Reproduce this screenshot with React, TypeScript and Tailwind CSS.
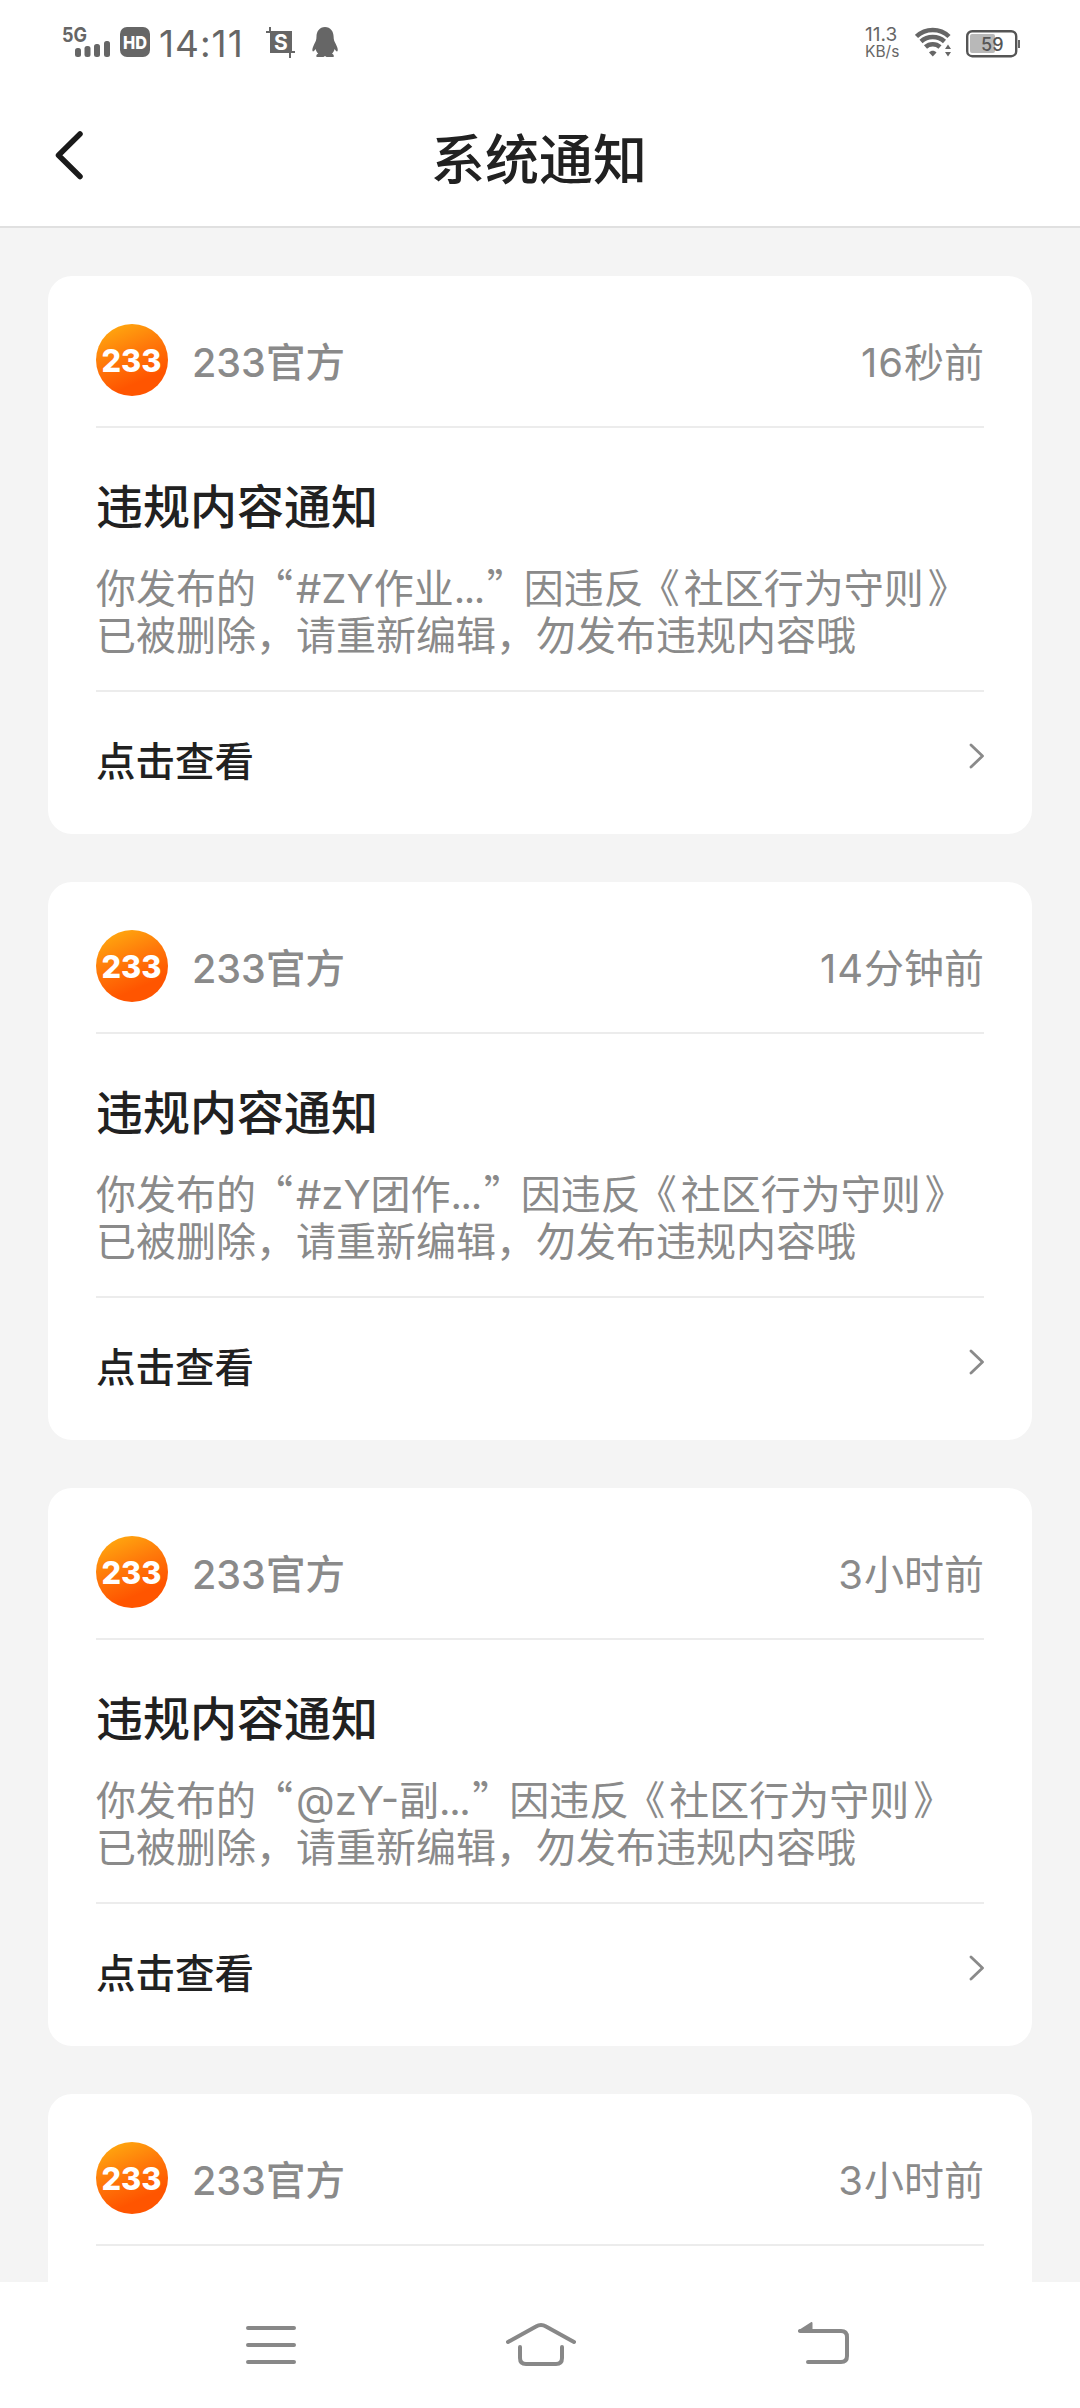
import React from 'react';

type Notice = {
  id: number;
  time: [string, string];
  tag?: string;
  excerpt?: string;
};

const notices: Notice[] = [
  { id: 1, time: ['16', '秒前'], tag: '#ZY', excerpt: '作业' },
  { id: 2, time: ['14', '分钟前'], tag: '#zY', excerpt: '团作' },
  { id: 3, time: ['3', '小时前'], tag: '@zY-', excerpt: '副' },
  { id: 4, time: ['3', '小时前'] },
];

const StatusBar = () => (
  <div className="flex h-[84px] items-start justify-between pt-[27px] pr-[60px] pl-[62px] font-[Inter,sans-serif] text-[#666]">
    <div className="flex">
      <svg className="overflow-visible" width="50" height="31" viewBox="0 0 50 31" fill="currentColor">
        <text x="0" y="15" fontSize="20" fontWeight="700" textLength="25" lengthAdjust="spacingAndGlyphs">
          5G
        </text>
        <rect x="13" y="21" width="6" height="9" rx="2.5" />
        <rect x="22.5" y="19" width="6" height="11" rx="2.5" />
        <rect x="32" y="17" width="6" height="13" rx="2.5" />
        <rect x="42" y="14" width="6" height="16" rx="2.5" />
      </svg>
      <svg className="ml-2" width="30" height="30" viewBox="0 0 30 30">
        <rect width="30" height="30" rx="7" fill="currentColor" />
        <text x="3" y="21.5" fontSize="18" fontWeight="800" fill="#fff" textLength="24" lengthAdjust="spacingAndGlyphs">
          HD
        </text>
      </svg>
      <span className="ml-[9px] w-[88px] text-[37px] leading-[34px] tracking-[1px] whitespace-nowrap">14:11</span>
      <svg className="ml-[18px]" width="31" height="31" viewBox="0 0 31 31">
        <path d="M5 0v5M1 5h5M25 25v6M24 25h6" stroke="currentColor" strokeWidth="2" />
        <rect x="5" y="4" width="22" height="22" fill="currentColor" />
        <text x="16" y="22.5" fontSize="21" fontWeight="700" fill="#fff" textAnchor="middle">
          S
        </text>
      </svg>
      <svg className="ml-[16px]" width="27" height="31" viewBox="0 0 27 31" fill="currentColor">
        <path d="M13 0C7.5 0 4.5 4.5 4.5 9.5C4.5 13 3.6 14.5 2.3 17C.8 20 0 22.5 .5 24C1 25 2.3 24 3.6 22C4.2 24 5 25.5 6.2 26.8C4.5 27.5 4 28.5 4.6 30H11.5L13 29L14.5 30H21.6C22.2 28.5 21.5 27.5 20 26.8C21.2 25.5 22 24 22.6 22C23.8 24 25 25 25.6 24C26.2 22.5 25.3 20 23.8 17C22.5 14.5 21.6 13 21.6 9.5C21.6 4.5 18.5 0 13 0Z" />
      </svg>
    </div>
    <div className="flex">
      <div className="flex w-[50px] flex-col whitespace-nowrap">
        <span className="text-[19px] leading-[15px]">11.3</span>
        <span className="mt-[3px] text-[15.5px] leading-[13px]">KB/s</span>
      </div>
      <svg width="37" height="31" viewBox="0 0 37 31" fill="none" stroke="currentColor">
        <path d="M1.5 9.5C10.5 .8 25 .8 34 9.5" strokeWidth="4.5" />
        <path d="M6 14.5C12.5 8.5 23 8.5 29.5 14.5" strokeWidth="4.5" />
        <path d="M10.5 20C14.5 16.3 21 16.3 25 20" strokeWidth="4.5" />
        <path d="M14 25.5C16 23.3 19.5 23.3 21.5 25.5L17.8 29.5Z" fill="currentColor" stroke="none" />
        <path d="M33 17.5L36 22H30ZM33 29.5L36 25H30Z" fill="currentColor" stroke="none" />
      </svg>
      <svg className="ml-[14px]" width="54" height="31" viewBox="0 0 54 31">
        <rect x="1.2" y="4.2" width="49" height="25" rx="5" fill="none" stroke="#555" strokeWidth="2.4" />
        <rect x="4" y="7" width="25" height="19" rx="2" fill="#b8b8b8" />
        <path d="M53 13v8" stroke="currentColor" strokeWidth="2" />
        <text x="15" y="23.5" fontSize="18" fontWeight="500" fill="#555">
          59
        </text>
      </svg>
    </div>
  </div>
);

const Header = () => (
  <header className="flex h-[144px] items-start border-b-2 border-[#e0e0e0]">
    <svg className="mt-[46px] ml-[54px]" width="32" height="51" viewBox="0 0 32 51">
      <path d="M26 4L4.5 25.3L26 46.5" fill="none" stroke="#1a1a1a" strokeWidth="5.5" strokeLinecap="round" strokeLinejoin="round" />
    </svg>
    <h1 className="mt-[33px] mr-[88px] flex-1 text-center text-[54px] leading-[80px] font-medium text-[#212121]">系统通知</h1>
  </header>
);

const Avatar = () => (
  <svg width="72" height="72" viewBox="0 0 72 72">
    <defs>
      <linearGradient id="official" x1="0.15" y1="0.05" x2="0.5" y2="0.85">
        <stop offset="0" stopColor="#ffa80f" />
        <stop offset="0.5" stopColor="#ff7a0a" />
        <stop offset="1" stopColor="#ff5500" />
      </linearGradient>
    </defs>
    <circle cx="36" cy="36" r="36" fill="url(#official)" />
    <text x="5.5" y="47.5" fontFamily="Inter, sans-serif" fontSize="31" fontWeight="800" fill="#fff" textLength="60" lengthAdjust="spacingAndGlyphs">
      233
    </text>
  </svg>
);

const NoticeBody = ({ tag, excerpt }: { tag: string; excerpt: string }) => (
  <>
    <div className="h-[264px] border-b-2 border-[#ececec] pt-[41px]">
      <h2 className="text-[47px] leading-[70px] font-medium text-[#212121]">违规内容通知</h2>
      <div className="mt-6 text-[40px] whitespace-nowrap text-[#8a8a8a]">
        <p className="h-[47px] leading-[47px]">
          你发布的<span className="-ml-[3px] mr-[3px]">“</span>
          <span className="font-[Inter]">{tag}</span>
          {excerpt}
          <span className="font-[Inter] tracking-[-1.5px]">...</span>
          <span className="ml-[3px] -mr-[3px]">”</span>因违反
          <span className="-ml-[4px] mr-[4px]">《</span>社区行为守则<span className="ml-[4px]">》</span>
        </p>
        <p className="h-[47px] leading-[47px]">已被删除，请重新编辑，勿发布违规内容哦</p>
      </div>
    </div>
    <div className="flex h-[140px] items-start justify-between pt-[37px]">
      <span className="text-[39.5px] leading-[60px] font-medium text-[#212121]">点击查看</span>
      <svg className="mt-[13px]" width="15" height="28" viewBox="0 0 15 28">
        <path d="M2 3L13.5 14L2 25" fill="none" stroke="#8a8a8a" strokeWidth="2.8" strokeLinecap="round" strokeLinejoin="round" />
      </svg>
    </div>
  </>
);

const NoticeCard = ({ notice }: { notice: Notice }) => (
  <article className="h-[558px] shrink-0 rounded-[24px] bg-white px-12">
    <div className="flex h-[152px] items-start border-b-2 border-[#ececec] pt-12 text-[#8a8a8a]">
      <Avatar />
      <p className="mt-[6px] ml-6 text-[39.5px] leading-[60px] font-medium">
        <span className="font-[Inter]">233</span>官方
      </p>
      <p className="mt-[6px] ml-auto text-[40px] leading-[60px]">
        <span className="font-[Inter] tracking-[1px]">{notice.time[0]}</span>
        {notice.time[1]}
      </p>
    </div>
    {notice.tag && notice.excerpt && <NoticeBody tag={notice.tag} excerpt={notice.excerpt} />}
  </article>
);

const NavBar = () => (
  <nav className="flex h-[126px] shrink-0 items-start bg-white pt-[40px] pl-[246px]">
    <svg width="50" height="46" viewBox="0 0 50 46" stroke="#888" strokeWidth="4" strokeLinecap="round">
      <path d="M2 6H48M2 23H48M2 40H48" />
    </svg>
    <svg className="ml-[210px]" width="70" height="46" viewBox="0 0 70 46" fill="none" stroke="#888" strokeWidth="4" strokeLinecap="round">
      <path d="M2 20L30 4.5Q35 1.5 40 4.5L68 20M14 25V36Q14 42 20 42H50Q56 42 56 36V25" />
    </svg>
    <svg className="ml-[222px]" width="52" height="46" viewBox="0 0 52 46" fill="none" stroke="#888" strokeWidth="4" strokeLinecap="round">
      <path d="M2 9H43Q49 9 49 15V34Q49 40 43 40H10" />
      <path d="M1 9L13.5 1V9Z" fill="#888" strokeWidth="2" strokeLinejoin="round" />
    </svg>
  </nav>
);

const App = () => {
  return (
    <div className="flex h-[2408px] w-[1080px] flex-col overflow-hidden bg-white font-['Noto_Sans_CJK_SC',sans-serif]">
      <StatusBar />
      <Header />
      <main className="flex min-h-0 flex-1 flex-col gap-12 overflow-hidden bg-[#f4f4f4] px-12 pt-12">
        {notices.map((notice) => (
          <NoticeCard key={notice.id} notice={notice} />
        ))}
      </main>
      <NavBar />
    </div>
  );
};

export default App;
